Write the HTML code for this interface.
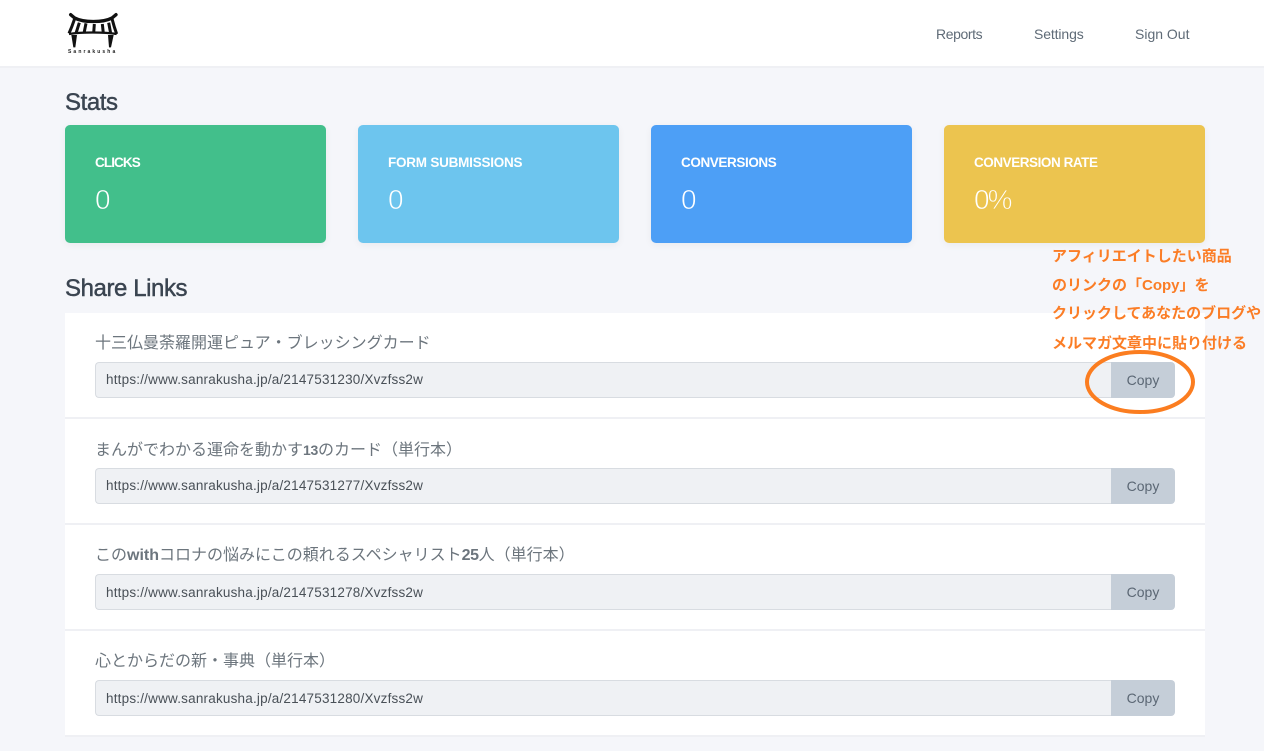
<!DOCTYPE html>
<html lang="ja"><head><meta charset="utf-8"><title>Sanrakusha</title>
<style>
*{box-sizing:border-box}
html,body{margin:0;padding:0}
body{width:1264px;height:751px;overflow:hidden;background:#f5f6fa;position:relative;font-family:"Liberation Sans","Noto Sans CJK JP",sans-serif;color:#495057}
.a{position:absolute;white-space:nowrap}
.nav{left:0;top:0;width:1264px;height:68px;background:#fff;border-bottom:2px solid #eff0f4}
.nl{top:25px;font-size:14px;line-height:18px;color:#5f6b77}
h2{margin:0;font-size:24px;line-height:30px;font-weight:500;color:#3a4450;-webkit-text-stroke:.45px #3a4450;letter-spacing:-.42px}
.card{top:125px;width:261px;height:118px;border-radius:5px;box-shadow:0 2px 8px rgba(0,0,0,.05);color:#fff}
.card b{position:absolute;left:30px;top:29px;font-size:13.5px;line-height:18px;font-weight:700}
.card span{position:absolute;left:30px;top:58px;font-size:28px;line-height:34px;-webkit-text-stroke:.7px var(--c)}
.row{left:65px;width:1140px;height:106px;background:#fff;border-bottom:2px solid #eff0f4}
.t{left:30px;top:20px;font-size:16px;line-height:22px;color:#6c757d}
.t b{letter-spacing:-.4px}
.t b.w{letter-spacing:0}
.t b.n{font-size:14px;letter-spacing:-.3px}
.inp{left:30px;top:49px;width:1016px;height:36px;background:#eff1f4;border:1px solid #d8dce1;border-right:0;border-radius:4px 0 0 4px;font-size:13.5px;line-height:34px;padding-left:10px;color:#495057;letter-spacing:.2px}
.btn{left:1046px;top:49px;width:64px;height:36px;background:#c5ced8;border-radius:0 4px 4px 0;font-size:14px;line-height:36px;text-align:center;color:#5b6774}
.note{left:1052px;font-size:15px;line-height:20px;font-weight:700;color:#fb7d26}
</style></head><body>
<div class="a nav"></div>
<svg class="a" style="left:50px;top:0" width="120" height="70" viewBox="0 0 360 210" fill="none" stroke="#111">
<path d="M62 44L74 54C100 68 160 68 186 54L198 44" stroke-width="10" stroke-linecap="round"/>
<path d="M74 56Q66 80 57 100M186 56Q192 80 200 102" stroke-width="9"/>
<path d="M88 68L78 100M108 70L102 100M133 72L131 100M157 72L160 100M176 68L182 100" stroke-width="9"/>
<path d="M57 102C90 96 165 96 200 102" stroke-width="7"/>
<path d="M64 105L81 105L76 142L70 142ZM174 105L191 105L183 142L177 142Z" fill="#111" stroke="none"/>
</svg>
<div class="a" style="left:68px;top:49px;font-size:5px;line-height:6px;font-weight:700;letter-spacing:2.1px;color:#222">Sanrakusha</div>
<div class="a nl" style="left:936px;letter-spacing:-.4px">Reports</div>
<div class="a nl" style="left:1034px;letter-spacing:-.12px">Settings</div>
<div class="a nl" style="left:1135px">Sign Out</div>

<h2 class="a" style="left:65px;top:88px">Stats</h2>
<div class="a card" style="left:65px;background:#42bf8b;--c:#42bf8b"><b style="letter-spacing:-.9px">CLICKS</b><span>0</span></div>
<div class="a card" style="left:358px;background:#6dc5ee;--c:#6dc5ee"><b style="letter-spacing:-.23px">FORM SUBMISSIONS</b><span>0</span></div>
<div class="a card" style="left:651px;background:#4d9ff6;--c:#4d9ff6"><b style="letter-spacing:-.4px">CONVERSIONS</b><span>0</span></div>
<div class="a card" style="left:944px;background:#ecc44f;--c:#ecc44f"><b style="letter-spacing:-.45px">CONVERSION RATE</b><span style="letter-spacing:-2px">0%</span></div>

<h2 class="a" style="left:65px;top:274px">Share Links</h2>

<div class="a row" style="top:313px">
<div class="a t">十三仏曼荼羅開運ピュア・ブレッシングカード</div>
<div class="a inp">https://www.sanrakusha.jp/a/2147531230/Xvzfss2w</div><div class="a btn">Copy</div></div>
<div class="a row" style="top:419px">
<div class="a t">まんがでわかる運命を動かす<b class="n">13</b>のカード（単行本）</div>
<div class="a inp">https://www.sanrakusha.jp/a/2147531277/Xvzfss2w</div><div class="a btn">Copy</div></div>
<div class="a row" style="top:525px">
<div class="a t">この<b class="w">with</b>コロナの悩みにこの頼れるスペシャリスト<b>25</b>人（単行本）</div>
<div class="a inp" style="line-height:35px">https://www.sanrakusha.jp/a/2147531278/Xvzfss2w</div><div class="a btn">Copy</div></div>
<div class="a row" style="top:631px">
<div class="a t">心とからだの新・事典（単行本）</div>
<div class="a inp" style="line-height:35px">https://www.sanrakusha.jp/a/2147531280/Xvzfss2w</div><div class="a btn">Copy</div></div>

<div class="a note" style="top:247px">アフィリエイトしたい商品</div>
<div class="a note" style="top:276px">のリンクの「Copy」を</div>
<div class="a note" style="top:304px">クリックしてあなたのブログや</div>
<div class="a note" style="top:334px">メルマガ文章中に貼り付ける</div>
<svg class="a" style="left:1080px;top:345px" width="120" height="76" viewBox="0 0 120 76" fill="none"><ellipse cx="60" cy="37" rx="53" ry="30" stroke="#fb7d20" stroke-width="4"/></svg>
</body></html>
